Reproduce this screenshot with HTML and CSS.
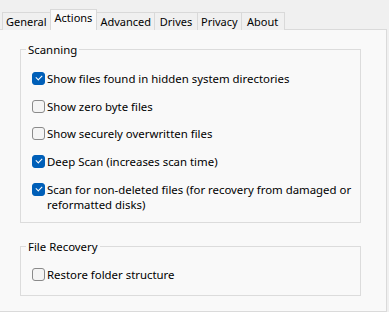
FILE: index.html
```html
<!DOCTYPE html>
<html lang="en">
  <head>
    <meta charset="UTF-8" />
    <title>Options - Actions</title>
    <link rel="stylesheet" href="styles.css">
  </head>
  <body>
    <div class="tabs">
      <div class="tab">General</div>
      <div class="tab selected">Actions</div>
      <div class="tab">Advanced</div>
      <div class="tab">Drives</div>
      <div class="tab">Privacy</div>
      <div class="tab">About</div>
    </div>

    <div class="panel">
      <fieldset class="group scanning">
        <legend>Scanning</legend>
        <label class="option"><span class="box checked"></span>Show files found in hidden system directories</label>
        <label class="option"><span class="box"></span>Show zero byte files</label>
        <label class="option"><span class="box"></span>Show securely overwritten files</label>
        <label class="option"><span class="box checked"></span>Deep Scan (increases scan time)</label>
        <label class="option"><span class="box checked"></span>Scan for non-deleted files (for recovery from damaged or<br>reformatted disks)</label>
      </fieldset>

      <fieldset class="group recovery">
        <legend>File Recovery</legend>
        <label class="option"><span class="box"></span>Restore folder structure</label>
      </fieldset>
    </div>
  </body>
</html>
```

FILE: styles.css
```css
body {
  margin: 0;
  background: #f0f0f0;
  color: #000;
  font-family: "Noto Sans", "Open Sans", sans-serif;
  font-size: 11.4px;
  height: 312px;
  overflow: hidden;
}
.tabs {
  display: flex;
  align-items: flex-end;
  padding: 10px 0 0 2px;
  height: 20px;
  position: relative;
  z-index: 1;
}
.tab {
  height: 17px;
  line-height: 18px;
  min-width: 36px;
  padding: 0 3px;
  text-align: center;
  font-size: 11px;
  border: 1px solid #d9d9d9;
  border-bottom: none;
  margin-right: -1px;
  background: #f0f0f0;
  white-space: nowrap;
}
.tab.selected {
  height: 20px;
  line-height: 16px;
  padding: 0 4px;
  background: #f9f9f9;
  position: relative;
}
.panel {
  margin: -1px 0 0 -1px;
  width: 388px;
  height: 283px;
  border: 1px solid #dadada;
  background: #f9f9f9;
  padding: 12px 0 0 20px;
  box-sizing: border-box;
}
.group {
  margin: 0;
  width: 341px;
  box-sizing: border-box;
  border: 1px solid #dcdcdc;
  padding: 0 0 0 11px;
}
.group legend {
  padding: 0 2px;
  margin-left: -6px;
  line-height: 15px;
}
.scanning {
  height: 181px;
  padding-top: 14px;
}
.recovery {
  margin-top: 16px;
  height: 57px;
  padding-top: 13px;
}
.option {
  display: flex;
  align-items: flex-start;
  line-height: 15px;
  margin-bottom: 12.7px;
  white-space: nowrap;
}
.box {
  flex: none;
  width: 13px;
  height: 13px;
  box-sizing: border-box;
  border: 1px solid #8a8a8a;
  border-radius: 3px;
  background: #f4f4f4;
  margin: 1px 2px 0 0;
  position: relative;
}
.box.checked {
  background: #005fb8;
  border-color: #005fb8;
}
.box.checked::after {
  content: "";
  position: absolute;
  left: 3px;
  top: 2px;
  width: 5px;
  height: 3px;
  border-left: 1.2px solid #fff;
  border-bottom: 1.2px solid #fff;
  transform: rotate(-45deg);
}
```
